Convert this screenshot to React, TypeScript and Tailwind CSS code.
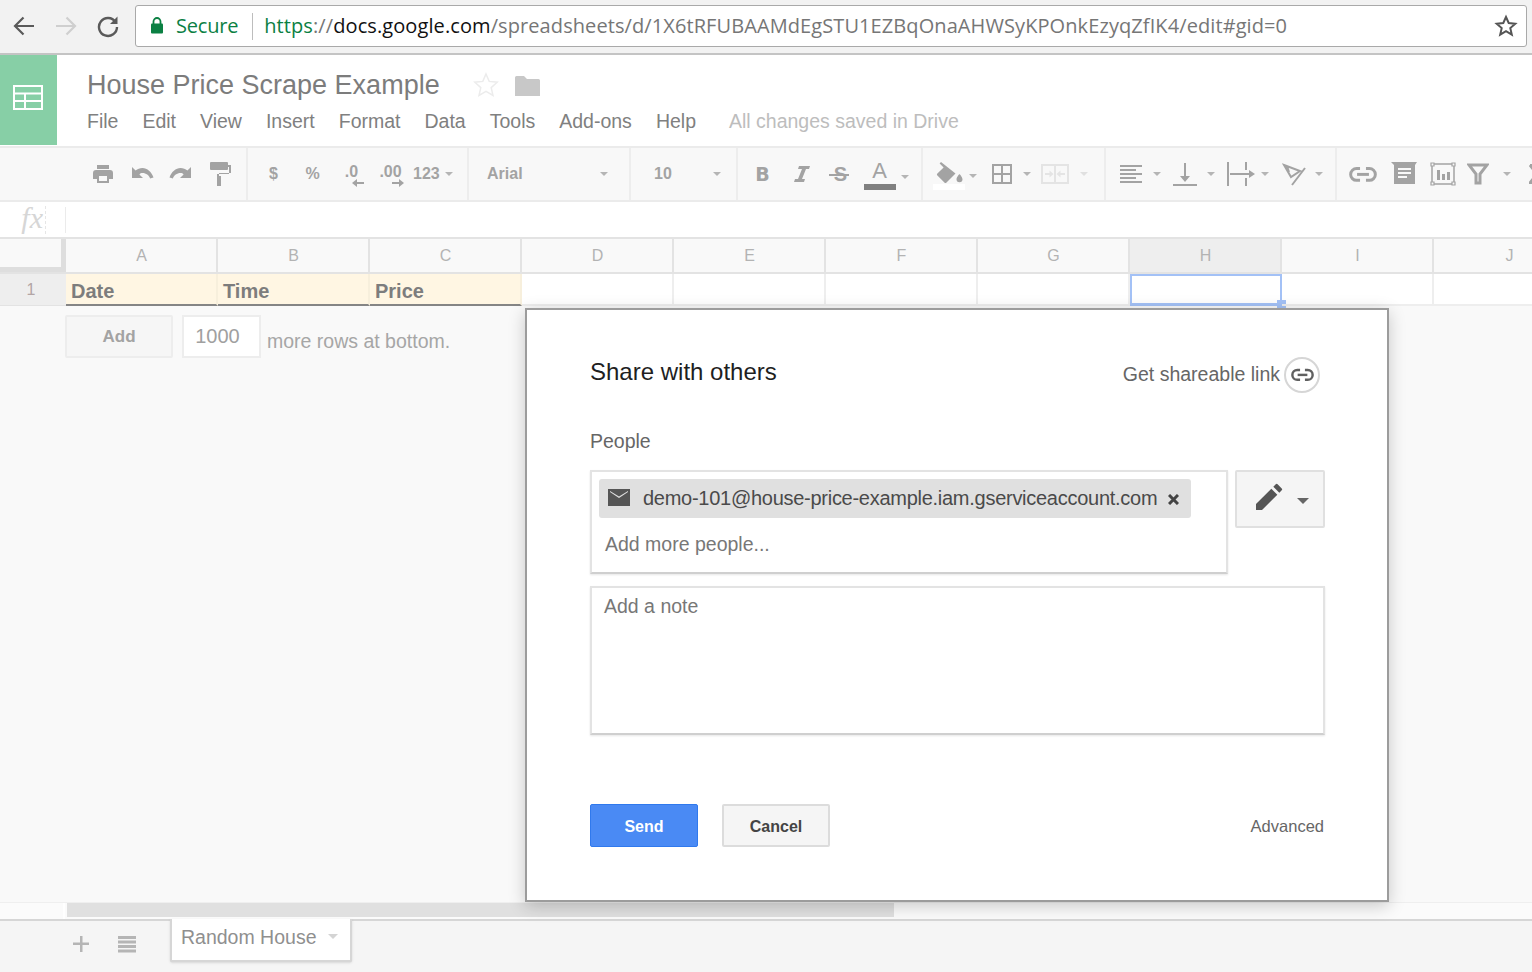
const sans = { fontFamily: '"Liberation Sans", Arial, sans-serif' };

const columns = ['A', 'B', 'C', 'D', 'E', 'F', 'G', 'H', 'I', 'J'];
const menus = ['File', 'Edit', 'View', 'Insert', 'Format', 'Data', 'Tools', 'Add-ons', 'Help'];

function Caret({ className = '' }: { className?: string }) {
  return <div className={`h-0 w-0 shrink-0 border-x-[4px] border-t-[4px] border-x-transparent border-t-[#b5b5b5] ${className}`} />;
}

function Tool({ children, className = 'w-[39px]' }: { children: React.ReactNode; className?: string }) {
  return <div className={`flex h-6 shrink-0 items-center justify-center ${className}`}>{children}</div>;
}

function LinkGlyph({ color = '#a3a3a3', size = 28 }: { color?: string; size?: number }) {
  return (
    <svg width={size} height={size * 0.6} viewBox="0 0 28 17" fill="none" stroke={color} strokeWidth="3">
      <path d="M11 2.500H7.500a6 6 0 0 0 0 12H11" />
      <path d="M17 2.500h3.500a6 6 0 0 1 0 12H17" />
      <path d="M8 8.500h12" />
    </svg>
  );
}

function BrowserBar() {
  return (
    <div className="flex h-[55px] shrink-0 items-center border-b-2 border-[#c4c4c4] bg-[#f2f2f2] pb-[1px]">
      <div className="flex w-[135px] shrink-0 items-center">
        <svg width="24" height="24" viewBox="0 0 24 24" fill="none" stroke="#5a5a5a" strokeWidth="2.200" className="ml-[12px]">
          <path d="M22 12H3M11.500 3.500 3 12l8.500 8.500" />
        </svg>
        <svg width="24" height="24" viewBox="0 0 24 24" fill="none" stroke="#cfcfcf" strokeWidth="2.200" className="ml-[18px]">
          <path d="M2 12h19M12.500 3.500 21 12l-8.500 8.500" />
        </svg>
        <svg width="24" height="24" viewBox="0 0 24 24" fill="none" stroke="#5a5a5a" strokeWidth="2.400" className="ml-[18px]">
          <path d="M19.500 8A9 9 0 1 0 21 13" />
          <path d="M21.500 2.500v7.500H14" fill="#5a5a5a" stroke="none" />
        </svg>
      </div>
      <div className="flex h-[42px] w-[1392px] shrink-0 items-center rounded-[3px] border border-[#a9a9a9] bg-white pl-[14px]" style={{ fontFamily: '"Open Sans", sans-serif' }}>
        <svg width="14" height="17" viewBox="0 0 14 17" className="mb-[1px] shrink-0">
          <path d="M3.500 7V4.500a3.500 3.500 0 0 1 7 0V7" fill="none" stroke="#0b8043" strokeWidth="1.800" />
          <rect x="1" y="6.500" width="12" height="10" rx="1" fill="#0b8043" />
        </svg>
        <span className="ml-[12px] text-[20px] leading-none tracking-[-0.2px] text-[#0b8043]">Secure</span>
        <div className="ml-[14px] h-[27px] w-px bg-[#bdbdbd]" />
        <span className="ml-[11px] text-[20px] leading-none tracking-[0.09px] text-[#767676]">
          <span className="text-[#0b8043]">https</span>://<span className="text-[#111]">docs.google.com</span>/spreadsheets/d/1X6tRFUBAAMdEgSTU1EZBqOnaAHWSyKPOnkEzyqZfIK4/edit#gid=0
        </span>
        <svg width="24" height="24" viewBox="0 0 24 24" fill="none" stroke="#555" strokeWidth="2" className="ml-auto mr-[8px]">
          <path d="m12 3 2.700 6 6.600.7-5 4.400 1.500 6.500-5.800-3.400-5.800 3.400 1.500-6.500-5-4.400 6.600-.7z" />
        </svg>
      </div>
    </div>
  );
}

function DocHeader() {
  return (
    <div className="flex h-[91px] shrink-0 items-start bg-white">
      <div className="flex h-[90px] w-[57px] shrink-0 items-center justify-center bg-[#87cfa6]">
        <svg width="30" height="25" viewBox="0 0 30 25" fill="none" stroke="#fff" strokeWidth="2" className="mb-[5px] mr-[2px]">
          <path d="M1 1h28v23H1zM1 8.500h28M1 16h28M12 8.500V24" />
        </svg>
      </div>
      <div className="pl-[30px]">
        <div className="flex h-[52px] items-end">
          <span className="text-[27px] leading-[44px] text-[#7c7c7c]">House Price Scrape Example</span>
          <svg width="26" height="26" viewBox="0 0 26 26" fill="#fff" stroke="#ececec" strokeWidth="1.500" className="mb-[9px] ml-[33px]">
            <path d="m13 2 3.200 7.400 8 .8-6 5.400 1.800 7.900L13 19.400l-7 4.100 1.800-7.900-6-5.400 8-.8z" />
          </svg>
          <svg width="26" height="22" viewBox="0 0 26 22" fill="#c8c8c8" className="mb-[10px] ml-[15px]">
            <path d="M1 2.500A1.500 1.500 0 0 1 2.500 1H10l3 3h11.500A1.500 1.500 0 0 1 26 5.500V21H1z" />
          </svg>
        </div>
        <div className="mt-[2px] flex items-center">
          <div className="flex gap-[24px] text-[19.5px] leading-[24px] text-[#808080]">
            {menus.map((m) => (
              <span key={m}>{m}</span>
            ))}
          </div>
          <span className="ml-[33px] text-[19.5px] leading-[24px] text-[#bdbdbd]">All changes saved in Drive</span>
        </div>
      </div>
    </div>
  );
}

function Toolbar() {
  const group = 'flex h-full shrink-0 items-center border-r-2 border-[#ededed]';
  return (
    <div className="flex h-[56px] shrink-0 items-stretch overflow-hidden border-y-2 border-[#ebebeb] bg-[#f8f8f8] text-[16px] font-bold text-[#a3a3a3]">
      <div className={`${group} w-[248px] pl-[83px]`}>
        <Tool>
          <svg width="24" height="24" viewBox="0 0 24 24" fill="#a3a3a3">
            <path d="M19 8H5a3 3 0 0 0-3 3v6h4v4h12v-4h4v-6a3 3 0 0 0-3-3zm-3 11H8v-5h8zM18 3H6v4h12z" />
          </svg>
        </Tool>
        <Tool>
          <svg width="24" height="24" viewBox="0 0 24 24" fill="#a3a3a3">
            <path d="M12.500 6c-2.650 0-5.050 1-6.900 2.600L2 5v11h11l-3.620-3.620C10.300 11.500 11 11 12.500 11c3.540 0 6.550 2.310 7.600 5.500l3.400-1C21.720 10 17.150 6 12.500 6z" />
          </svg>
        </Tool>
        <Tool>
          <svg width="24" height="24" viewBox="0 0 24 24" fill="#a3a3a3">
            <path d="M18.400 8.600C16.550 7 14.150 6 11.500 6 6.850 6 2.280 10 .5 15.500l3.400 1C4.950 13.310 7.960 11 11.500 11c1.500 0 2.200.5 3.120 1.380L11 16h11V5z" />
          </svg>
        </Tool>
        <Tool>
          <svg width="24" height="26" viewBox="0 0 24 26" fill="#a3a3a3">
            <path d="M3 1h16a1 1 0 0 1 1 1v2h3v8H11v3h2v10H9V13h12V6h-1v2a1 1 0 0 1-1 1H3a1 1 0 0 1-1-1V2a1 1 0 0 1 1-1z" />
          </svg>
        </Tool>
      </div>
      <div className={`${group} w-[221px] pl-[6px]`}>
        <Tool><span>$</span></Tool>
        <Tool><span>%</span></Tool>
        <Tool>
          <div className="relative mb-[4px] leading-none">
            <span>.0</span>
            <svg width="12" height="8" viewBox="0 0 12 8" fill="#a3a3a3" className="absolute left-[7px] top-[15px]">
              <path d="M0 4 5 0v3h7v2H5v3z" />
            </svg>
          </div>
        </Tool>
        <Tool>
          <div className="relative mb-[4px] leading-none">
            <span>.00</span>
            <svg width="12" height="8" viewBox="0 0 12 8" fill="#a3a3a3" className="absolute left-[13px] top-[15px]">
              <path d="M12 4 7 0v3H0v2h7v3z" />
            </svg>
          </div>
        </Tool>
        <span className="ml-[3px]">123</span>
        <Caret className="ml-[5px]" />
      </div>
      <div className={`${group} w-[162px] justify-between pl-[18px] pr-[21px]`}>
        <span>Arial</span>
        <Caret />
      </div>
      <div className={`${group} w-[107px] justify-between pl-[23px] pr-[15px]`}>
        <span>10</span>
        <Caret />
      </div>
      <div className={`${group} w-[185px] pl-[5px]`}>
        <Tool><span className="text-[19px] font-black" style={{ fontFamily: '"DejaVu Sans", sans-serif' }}>B</span></Tool>
        <Tool>
          <svg width="16" height="16" viewBox="0 0 16 16" fill="#a3a3a3">
            <path d="M5 0h11l-1 3h-3L8 13h3l-1 3H0l1-3h3L8 3H4z" />
          </svg>
        </Tool>
        <Tool>
          <div className="relative text-[20px] font-bold leading-none">
            <span>S</span>
            <div className="absolute -left-[5px] top-[10px] h-[2px] w-[20px] bg-[#a3a3a3]" />
          </div>
        </Tool>
        <Tool>
          <div className="flex flex-col items-center pt-[2px]">
            <span className="text-[22px] font-normal leading-[22px]">A</span>
            <div className="mt-[2px] h-[6px] w-[32px] bg-[#808080]" />
          </div>
        </Tool>
        <Caret className="ml-[2px] mt-[6px]" />
      </div>
      <div className={`${group} w-[183px] pl-[6px]`}>
        <Tool>
          <div className="flex flex-col items-center pt-[2px]">
            <svg width="28" height="22" viewBox="0 0 28 22" fill="#a3a3a3">
              <path d="M6 1 4.600 2.400l4 4-6.200 6.100a1.500 1.500 0 0 0 0 2.100l7 7a1.500 1.500 0 0 0 2.100 0l9-9zM24.500 13s-3 3.200-3 5.200a3 3 0 0 0 6 0c0-2-3-5.200-3-5.200z" />
            </svg>
            <div className="mt-[1px] h-[6px] w-[32px] bg-white" />
          </div>
        </Tool>
        <Caret className="ml-[1px] mt-[4px]" />
        <Tool className="ml-[5px] w-[39px]">
          <svg width="20" height="20" viewBox="0 0 20 20" fill="none" stroke="#a3a3a3" strokeWidth="2">
            <path d="M1 1h18v18H1zM10 1v18M1 10h18" />
          </svg>
        </Tool>
        <Caret className="ml-[2px]" />
        <Tool className="ml-[4px] w-[39px]">
          <svg width="28" height="20" viewBox="0 0 28 20">
            <path d="M1 1h26v18H1zM14 1v18M4 10h6M24 10h-6" fill="none" stroke="#e4e4e4" strokeWidth="2" />
            <path d="m12.500 10-4-3.500v7zM15.500 10l4-3.500v7z" fill="#e4e4e4" />
          </svg>
        </Tool>
        <Caret className="ml-[6px] !border-t-[#e0e0e0]" />
      </div>
      <div className={`${group} w-[231px] pl-[5px]`}>
        <Tool>
          <svg width="22" height="18" viewBox="0 0 22 18" fill="#a3a3a3">
            <path d="M0 0h22v2H0zM0 4h16v2H0zM0 8h22v2H0zM0 12h16v2H0zM0 16h22v2H0z" />
          </svg>
        </Tool>
        <Caret className="ml-[3px]" />
        <Tool className="ml-[4px] w-[39px]">
          <svg width="24" height="24" viewBox="0 0 24 24" fill="#a3a3a3">
            <path d="M11 1h2v13h4l-5 6-5-6h4zM0 22h24v2H0z" />
          </svg>
        </Tool>
        <Caret className="ml-[3px]" />
        <Tool className="ml-[6px] w-[39px]">
          <svg width="28" height="24" viewBox="0 0 28 24" fill="#a3a3a3">
            <path d="M0 0h2v24H0zM18 0h2v8h-2zM18 16h2v8h-2zM3 11h19V8l6 4-6 4v-3H3z" />
          </svg>
        </Tool>
        <Caret className="ml-[1px]" />
        <Tool className="ml-[5px] w-[39px]">
          <svg width="24" height="24" viewBox="0 0 24 24" fill="none" stroke="#a3a3a3" strokeWidth="2">
            <path d="M2 3 18 9l-9 6zM5 4l2 6M23 6 10 23" />
          </svg>
        </Tool>
        <Caret className="ml-[2px]" />
      </div>
      <div className="flex h-full shrink-0 items-center pl-[6px]">
        <Tool><LinkGlyph /></Tool>
        <Tool className="ml-[2px] w-[39px]">
          <svg width="26" height="26" viewBox="0 0 26 26">
            <path d="M0 1h26l-2 3v19H3V4z" fill="#a3a3a3" />
            <path d="M7 7h13v2H7zM7 11h13v2H7zM7 15h9v2H7z" fill="#f8f8f8" />
          </svg>
        </Tool>
        <Tool>
          <svg width="28" height="26" viewBox="0 0 28 26">
            <path d="M3 3h22v20H3z" fill="none" stroke="#a3a3a3" strokeWidth="1.500" />
            <path d="M2 2h3v3H2zM23 2h3v3h-3zM2 21h3v3H2zM23 21h3v3h-3z" fill="#f8f8f8" stroke="#a3a3a3" strokeWidth="1.200" />
            <path d="M8 9h3v10H8zM13 13h3v6h-3zM18 11h3v8h-3z" fill="#a3a3a3" />
          </svg>
        </Tool>
        <Tool className="w-[32px]">
          <svg width="22" height="22" viewBox="0 0 22 22" fill="none" stroke="#a3a3a3" strokeWidth="3">
            <path d="M2 2h18l-7 9v9h-4v-9z" fill="#f8f8f8" />
          </svg>
        </Tool>
        <Caret className="ml-[9px]" />
        <svg width="14" height="20" viewBox="0 0 14 20" fill="none" stroke="#a3a3a3" strokeWidth="3" className="ml-[18px] shrink-0">
          <path d="M1 1h12M1 1l7 9-7 9h12" />
        </svg>
      </div>
    </div>
  );
}

function FormulaBar() {
  return (
    <div className="flex h-[35px] shrink-0 items-center bg-white">
      <div className="flex h-[28px] w-[46px] shrink-0 items-center justify-end border-r border-dashed border-[#e6e6e6] pr-[2px]">
        <span className="mb-[4px] text-[30px] italic leading-[28px] text-[#d6d6d6]" style={{ fontFamily: '"Liberation Serif", serif' }}>fx</span>
      </div>
      <div className="ml-[19px] h-[26px] w-px bg-[#ebebeb]" />
    </div>
  );
}

function Sheet() {
  return (
    <div className="flex min-h-0 flex-1 flex-col overflow-hidden">
      <div className="flex h-[37px] shrink-0 border-y-2 border-[#e3e3e3] bg-[#f9f9f9]">
        <div className="w-[66px] shrink-0 border-b-[5px] border-r-[5px] border-[#dedede] bg-[#f9f9f9]" />
        {columns.map((c) => (
          <div
            key={c}
            className={`flex w-[152px] shrink-0 items-center justify-center border-r-2 border-[#e3e3e3] pl-[1px] text-[16px] text-[#b3b3b3] ${c === 'H' ? 'bg-[#eeeeee] text-[#aaaaaa]' : ''}`}
          >
            {c}
          </div>
        ))}
      </div>
      <div className="flex h-[32px] shrink-0 bg-white">
        <div className="flex w-[66px] shrink-0 items-center justify-center border-b border-[#e3e3e3] bg-[#eeeeee] pr-[4px] text-[16px] text-[#b3a5a5]">1</div>
        {['Date', 'Time', 'Price'].map((h) => (
          <div key={h} className="flex w-[152px] shrink-0 items-center border-b-2 border-r-2 border-[#f7efdc] !border-b-[#858585] bg-[#fff6e3] pl-[5px] pt-[3px] text-[20px] font-bold text-[#7d7d7d]">
            {h}
          </div>
        ))}
        {columns.slice(3).map((c) => (
          <div key={c} className={`relative w-[152px] shrink-0 ${c === 'H' ? 'border-2 border-b-[3px] border-[#a3c1f6]' : 'border-b-2 border-r-2 border-[#eeeeee]'}`}>
            {c === 'H' && <div className="absolute -bottom-[6px] -right-[6px] h-[9px] w-[9px] bg-[#a3c1f6]" />}
          </div>
        ))}
      </div>
      <div className="flex flex-1 items-start bg-[#f9f9f9] pl-[65px] pt-[9px]">
        <div className="flex h-[43px] w-[108px] items-center justify-center rounded-[2px] border-2 border-[#ededed] bg-[#f6f6f6] pt-[1px] text-[17px] font-bold text-[#a3a3a3]">Add</div>
        <div className="ml-[9px] flex h-[43px] w-[79px] items-center justify-center border-2 border-[#ededed] bg-white pb-[2px] pr-[8px] text-[20px] text-[#a0a0a0]">1000</div>
        <span className="ml-[6px] mt-[13px] text-[19.5px] leading-[26px] text-[#a6a6a6]">more rows at bottom.</span>
      </div>
    </div>
  );
}

function Footer() {
  return (
    <div className="shrink-0">
      <div className="flex h-[17px] border-t border-[#efefef] bg-[#fbfbfb]">
        <div className="w-[65px] border-r-2 border-white" />
        <div className="mb-[2px] ml-[2px] w-[827px] bg-[#e0e0e0]" />
      </div>
      <div className="flex h-[53px] border-t-2 border-[#d6d6d6] bg-[#f5f5f5]">
        <svg width="16" height="16" viewBox="0 0 16 16" fill="#b5b5b5" className="ml-[73px] mt-[15px]">
          <path d="M7 0h2.500v6.500H16V9H9.500v7H7V9H0V6.500h7z" />
        </svg>
        <svg width="18" height="17" viewBox="0 0 18 17" fill="#b5b5b5" className="ml-[29px] mt-[15px]">
          <path d="M0 0h18v3H0zM0 4.500h18v3H0zM0 9h18v3H0zM0 13.500h18v3H0z" />
        </svg>
        <div className="-mt-[2px] ml-[34px] flex h-[43px] w-[182px] items-start rounded-b-[2px] border-x-2 border-b-2 border-[#d6d6d6] bg-white pl-[9px] pt-[5px] shadow-sm">
          <span className="text-[19.5px] leading-[26px] text-[#8f8f8f]">Random House</span>
          <Caret className="ml-[11px] mt-[10px] !border-x-[5px] !border-t-[5px] !border-t-[#d4d4d4]" />
        </div>
      </div>
    </div>
  );
}

function ShareDialog() {
  return (
    <div className="absolute left-[525px] top-[308px] flex h-[594px] w-[864px] flex-col border-2 border-[#9c9c9c] bg-white pb-[53px] pl-[63px] pr-[62px] pt-[44px] shadow-[0_4px_16px_rgba(0,0,0,0.2)]">
      <div className="flex items-center justify-between pr-[5px]">
        <span className="text-[24px] leading-[36px] text-[#1f1f1f]">Share with others</span>
        <div className="flex translate-y-[3px] items-center">
          <span className="text-[19.5px] text-[#666]">Get shareable link</span>
          <div className="ml-[4px] flex h-[36px] w-[36px] items-center justify-center rounded-full border-2 border-[#d6d6d6]">
            <LinkGlyph color="#606060" size={23} />
          </div>
        </div>
      </div>
      <div className="mt-[39px] text-[19.5px] leading-[24px] text-[#666]">People</div>
      <div className="mt-[17px] flex items-start justify-between">
        <div className="h-[104px] w-[638px] border-2 border-[#e3e3e3] !border-b-[#cfcfcf] pl-[7px] pt-[7px] shadow-[0_1px_2px_rgba(0,0,0,0.1)]">
          <div className="flex h-[39px] w-[592px] items-center rounded-[3px] bg-[#e0e0e0] pl-[9px]">
            <svg width="22" height="17" viewBox="0 0 22 17" fill="#555" className="mb-[3px] shrink-0">
              <path d="M0 0h22v17H0zM2 3l9 6 9-6v-1L11 7.500 2 2z" fillRule="evenodd" />
            </svg>
            <span className="ml-[13px] mb-[2px] whitespace-nowrap text-[20px] leading-none tracking-[-0.27px] text-[#4a4a4a]">demo-101@house-price-example.iam.gserviceaccount.com</span>
            <svg width="11" height="11" viewBox="0 0 11 11" stroke="#444" strokeWidth="3" className="ml-[11px] mt-[2px] shrink-0">
              <path d="m1 1 9 9M10 1l-9 9" />
            </svg>
          </div>
          <div className="ml-[6px] mt-[14px] text-[19.5px] leading-[24px] text-[#777]">Add more people...</div>
        </div>
        <div className="flex h-[58px] w-[90px] items-center rounded-[2px] border-2 border-[#e0e0e0] bg-[#f5f5f5] pl-[15px]">
          <svg width="32" height="32" viewBox="0 0 24 24" fill="#555" className="mb-[3px]">
            <path d="M3 21v-4.500L14.500 5l4.500 4.500L7.500 21zM16 3.500l1.800-1.800a1 1 0 0 1 1.400 0l3.100 3.100a1 1 0 0 1 0 1.400L20.500 8z" />
          </svg>
          <Caret className="ml-[13px] mt-[3px] !border-x-[6px] !border-t-[6px] !border-t-[#666]" />
        </div>
      </div>
      <div className="mt-[12px] h-[149px] border-2 border-[#e3e3e3] !border-b-[#cfcfcf] pl-[12px] pt-[4px] text-[19.5px] leading-[28px] text-[#777] shadow-[0_1px_2px_rgba(0,0,0,0.1)]">
        Add a note
      </div>
      <div className="mt-auto flex items-center">
        <div className="flex h-[43px] w-[108px] items-center justify-center rounded-[2px] border border-[#3079ed] bg-[#4a8af4] pt-[2px] text-[16px] font-bold text-white">Send</div>
        <div className="ml-[24px] flex h-[43px] w-[108px] items-center justify-center rounded-[2px] border-2 border-[#dcdcdc] bg-[#f5f5f5] pt-[2px] text-[16px] font-bold text-[#444]">Cancel</div>
        <span className="ml-auto pr-px pt-[2px] text-[16.5px] text-[#666]">Advanced</span>
      </div>
    </div>
  );
}

export default function App() {
  return (
    <div className="relative flex h-[972px] w-[1532px] flex-col overflow-hidden bg-white" style={sans}>
      <BrowserBar />
      <DocHeader />
      <Toolbar />
      <FormulaBar />
      <Sheet />
      <Footer />
      <ShareDialog />
    </div>
  );
}
